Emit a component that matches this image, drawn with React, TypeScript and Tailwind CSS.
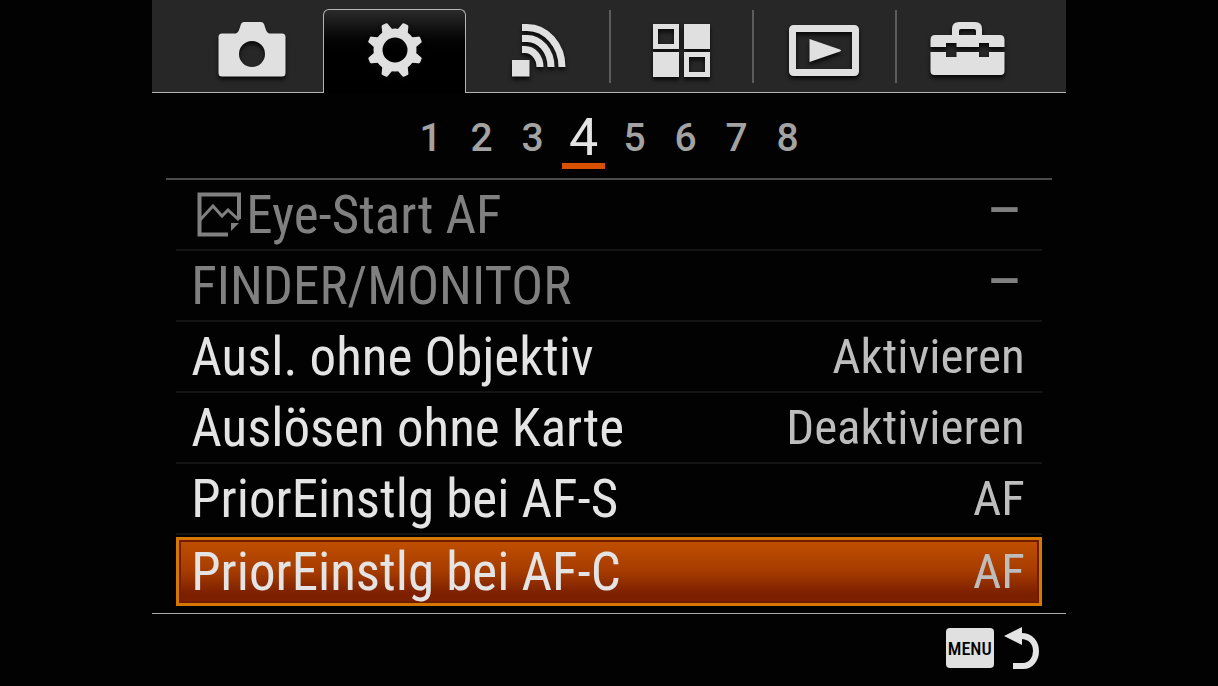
import React, { useState } from 'react';

interface Setting {
  label: string;
  value: string;
  disabled?: boolean;
  icon?: boolean;
}

const settings: Setting[] = [
  { label: 'Eye-Start AF', value: '–', disabled: true, icon: true },
  { label: 'FINDER/MONITOR', value: '–', disabled: true },
  { label: 'Ausl. ohne Objektiv', value: 'Aktivieren' },
  { label: 'Auslösen ohne Karte', value: 'Deaktivieren' },
  { label: 'PriorEinstlg bei AF-S', value: 'AF' },
  { label: 'PriorEinstlg bei AF-C', value: 'AF' },
];

const pages = [1, 2, 3, 4, 5, 6, 7, 8];

const CameraIcon = () => (
  <path
    fillRule="evenodd"
    d="M10 15.5H24Q26 15 27 12L29 6Q30 4 32 4H49Q51 4 52 6L54 12Q55 15 57 15.5H70Q73.500 15.500 73.500 19V55Q73.500 58.500 70 58.500H10Q6.500 58.500 6.500 55V19Q6.500 15.500 10 15.500ZM40 23a13 13 0 1 0 0 26a13 13 0 1 0 0-26Z"
  />
);

const GearIcon = () => (
  <g>
    <circle cx="40" cy="31" r="17" fill="none" stroke="currentColor" strokeWidth="9" />
    {[22.5, 67.5, 112.5, 157.5, 202.5, 247.5, 292.5, 337.5].map((angle) => (
      <path key={angle} d="M34 13L36.500 4.500Q37 3 38 3H42Q43 3 43.500 4.500L46 13Z" transform={`rotate(${angle} 40 31)`} />
    ))}
  </g>
);

const WirelessIcon = () => (
  <g>
    <rect x="14" y="42" width="17.500" height="16.500" />
    <g fill="none" stroke="currentColor" strokeWidth="7">
      <path d="M24 9.500H29A35 39.500 0 0 1 64 49" />
      <path d="M24 20.500H29A24 28.500 0 0 1 53 49" />
      <path d="M24 31.500H27A15 17.500 0 0 1 42 49" />
    </g>
  </g>
);

const AppsIcon = () => (
  <g>
    <path fillRule="evenodd" d="M12 6H38V31H12ZM17 11V26H33V11Z" />
    <rect x="43" y="6" width="26" height="25" />
    <rect x="12" y="34" width="26" height="25" />
    <path fillRule="evenodd" d="M43 34H69V59H43ZM48 39V54H64V39Z" />
  </g>
);

const PlaybackIcon = () => (
  <g>
    <rect x="8.500" y="10.500" width="63" height="44" rx="1" fill="none" stroke="currentColor" strokeWidth="7" />
    <path d="M25.500 21L56 31.500Q58 32.500 56 33.500L25.500 44Z" />
  </g>
);

const ToolboxIcon = () => (
  <g>
    <path
      fillRule="evenodd"
      d="M25 17V11Q25 4 32 4H48Q55 4 55 11V17H73Q77.500 17 77.500 22V29H62V25H52V29H29.500V25H19V29H3.500V22Q3.500 17 8 17ZM32 17H49V13Q49 11 47 11H34Q32 11 32 13Z"
    />
    <path d="M3.500 34H19V39H29.500V34H52V39H62V34H77.500V53Q77.500 57 73.500 57H7.500Q3.500 57 3.500 53Z" />
  </g>
);

const tabs = [
  { name: 'Kamera', Icon: CameraIcon },
  { name: 'Einstellungen', Icon: GearIcon },
  { name: 'Drahtlos', Icon: WirelessIcon },
  { name: 'Applikation', Icon: AppsIcon },
  { name: 'Wiedergabe', Icon: PlaybackIcon },
  { name: 'Setup', Icon: ToolboxIcon },
];

const StillImageIcon = () => (
  <svg viewBox="0 0 45 45" className="h-[45px] w-[45px] shrink-0" fill="none" stroke="currentColor" strokeWidth="4" aria-hidden="true">
    <path d="M42 27V2.500H2.500V42.500H31" />
    <path d="M3 28L16 14L25 24L31 18L42 28" strokeWidth="3" />
    <path d="M34 31H42L34 39Z" fill="currentColor" stroke="none" />
  </svg>
);

interface TabBarProps {
  active: number;
  onSelect: (index: number) => void;
}

const TabBar = ({ active, onSelect }: TabBarProps) => (
  <div className="flex h-[93px] bg-[#272727] pt-[9px]">
    <div className="w-7 border-b border-[#b4b4b4]" />
    <div role="tablist" className="grid flex-1 grid-cols-6">
      {tabs.map(({ name, Icon }, i) => (
        <button
          key={name}
          type="button"
          role="tab"
          aria-label={name}
          aria-selected={i === active}
          onClick={() => onSelect(i)}
          className={
            i === active
              ? 'rounded-t-md border border-b-0 border-[#b4b4b4] bg-linear-to-b from-[#2b2b2b] to-black to-60%'
              : 'border-b border-[#b4b4b4]'
          }
        >
          <span
            className={
              i > active + 1
                ? 'mb-2 flex h-[73px] items-center justify-center border-l-2 border-[#5c5c5c]'
                : 'mb-2 flex h-[73px] items-center justify-center'
            }
          >
            <svg viewBox="0 0 80 64" className="mt-1.5 h-16 w-20 text-[#e0e0e0] drop-shadow-[0_3px_2px_#080808]" fill="currentColor" aria-hidden="true">
              <Icon />
            </svg>
          </span>
        </button>
      ))}
    </div>
    <div className="w-7 border-b border-[#b4b4b4]" />
  </div>
);

interface PageBarProps {
  page: number;
  onSelect: (page: number) => void;
}

const PageBar = ({ page, onSelect }: PageBarProps) => (
  <nav aria-label="Seiten" className="mx-[14px] flex h-[87px] justify-center border-b-2 border-[#4b4b4b] pt-4 font-[Roboto,sans-serif]">
    {pages.map((n) => (
      <button key={n} type="button" onClick={() => onSelect(n)} className="flex w-[51px] justify-center">
        {n === page ? (
          <span className="h-[60px] w-[43px] border-b-[6px] border-[#d95000] text-[52px] leading-[58px] text-[#e4e4e4]">{n}</span>
        ) : (
          <span className="text-[39px] leading-[58px] font-medium text-[#a3a3a3]">{n}</span>
        )}
      </button>
    ))}
  </nav>
);

interface SettingRowProps {
  setting: Setting;
  selected: boolean;
  onSelect: () => void;
}

const SettingRow = ({ setting, selected, onSelect }: SettingRowProps) => {
  const base = 'flex w-full items-center justify-between whitespace-nowrap text-[53px] leading-[64px]';
  const look = selected
    ? 'mt-0.5 h-[69px] border-3 border-[#d67800] bg-linear-to-b from-[#c05000] via-[#a63b00] to-[#7c2000] to-85% px-3 text-[#e4e4e4] inset-shadow-[0_0_0_2px_#701c00]'
    : setting.disabled
      ? 'h-[71px] border-b-2 border-[#141414] px-[15px] text-[#808080]'
      : 'h-[71px] border-b-2 border-[#141414] px-[15px] text-[#e4e4e4]';

  return (
    <li>
      <button type="button" disabled={setting.disabled} onClick={onSelect} className={`${base} ${look}`}>
        <span className="flex items-center gap-1">
          {setting.icon && (
            <span className="pl-1.5">
              <StillImageIcon />
            </span>
          )}
          {setting.label}
        </span>
        <span className={setting.disabled ? 'self-start pr-1 text-[64px]' : 'pr-0.5 text-[49px] text-[#bdbdbd]'}>{setting.value}</span>
      </button>
    </li>
  );
};

const App = () => {
  const [tab, setTab] = useState(1);
  const [page, setPage] = useState(4);
  const [row, setRow] = useState(5);

  return (
    <div className="min-h-screen bg-[#020202] font-['Roboto_Condensed',Roboto,sans-serif]">
      <main className="mx-auto w-3/4">
        <TabBar active={tab} onSelect={setTab} />
        <PageBar page={page} onSelect={setPage} />
        <ul className="mx-6">
          {settings.map((setting, i) => (
            <SettingRow key={setting.label} setting={setting} selected={i === row} onSelect={() => setRow(i)} />
          ))}
        </ul>
        <footer className="mt-[7px] flex justify-end border-t border-[#a8a8a8] pt-3 pr-[26px]">
          <button type="button" className="flex items-center gap-[10px] text-[#e4e4e4]">
            <span className="flex h-10 w-12 items-center justify-center rounded bg-[#e0e0e0] text-[18px] font-medium text-black">MENU</span>
            <svg viewBox="0 0 36 44" className="h-11 w-9" aria-label="Zurück">
              <path d="M0 10L18 1V19Z" fill="currentColor" />
              <path d="M17 10C27 10 32 17 32 25C32 33 27 40 19 40H9" fill="none" stroke="currentColor" strokeWidth="6" />
            </svg>
          </button>
        </footer>
      </main>
    </div>
  );
};

export default App;
